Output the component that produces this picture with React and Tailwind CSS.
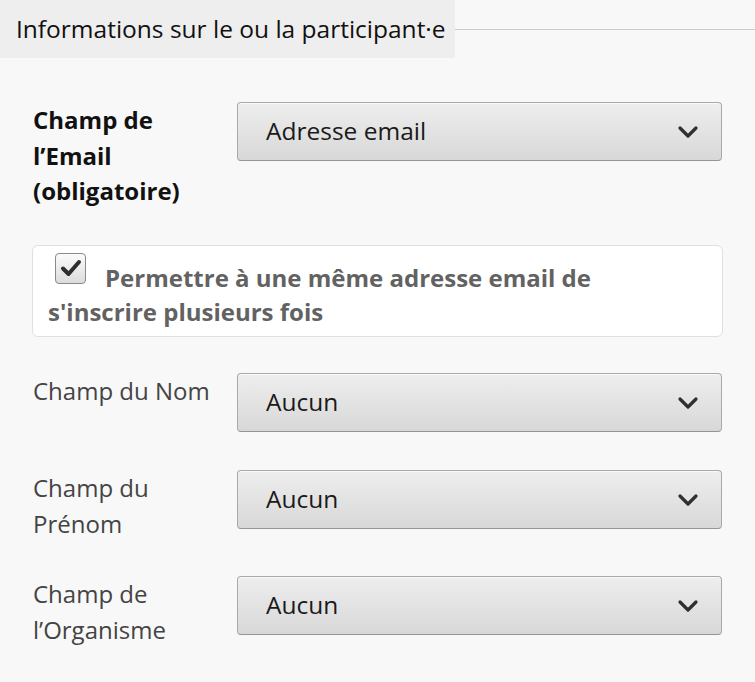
const Chevron = () => (
  <svg width="22" height="14" viewBox="0 0 22 14" fill="none">
    <path d="M3 3l8 8 8-8" stroke="#2f2f2f" strokeWidth="3.2" strokeLinecap="round" strokeLinejoin="round" />
  </svg>
);

const Select = ({ value }) => (
  <div className="flex h-[59px] flex-1 items-center justify-between rounded-[4px] border border-[#a9a9a9] border-b-[#959595] bg-gradient-to-b from-[#eeeeee] to-[#d8d8d8] pl-[28px] pr-[22px] shadow-[inset_0_1px_0_#fafafa]">
    <span className="text-[24.5px] text-[#1a1a1a]">{value}</span>
    <Chevron />
  </div>
);

const Row = ({ label, bold, value, className }) => (
  <div className={"flex items-start " + className}>
    <div
      className={
        bold
          ? "w-[204px] shrink-0 pr-[16px] text-[24px] font-bold leading-[35.5px] text-[#111]"
          : "w-[204px] shrink-0 pr-[16px] text-[24px] leading-[35.5px] text-[#444]"
      }
    >
      {label}
    </div>
    <Select value={value} />
  </div>
);

export default function App() {
  return (
    <div className="min-h-screen bg-[#f8f8f8] font-['Open_Sans',sans-serif]">
      <div className="flex items-center">
        <div className="flex h-[58px] w-[455px] shrink-0 items-center bg-[#eeeeee] pl-[16px] text-[24.5px] text-[#111]">
          Informations sur le ou la participant·e
        </div>
        <div className="h-px flex-1 bg-[#cccccc]" />
      </div>

      <div className="flex flex-col px-[33px] pt-[44px]">
        <Row bold label="Champ de l’Email (obligatoire)" value="Adresse email" className="mb-[36px]" />

        <div className="mb-[36px] -mx-px rounded-[6px] border border-[#e0e0e0] bg-white pl-[15px] pr-[100px] pb-[7px] pt-[11px] text-[24px] font-bold leading-[35px] text-[#626262]">
          <span className="mr-[19px] ml-[7px] inline-flex h-[31px] w-[31px] -translate-y-[4px] items-center justify-center rounded-[4px] border border-[#8a8a8a] bg-gradient-to-b from-[#fbfbfb] to-[#dcdcdc] align-[4px]">
            <svg width="22" height="20" viewBox="0 0 22 20" fill="none">
              <path d="M3 10.5l5.5 5.5L19 4" stroke="#2e2e2e" strokeWidth="4" strokeLinecap="round" strokeLinejoin="round" />
            </svg>
          </span>
          Permettre à une même adresse email de s'inscrire plusieurs fois
        </div>

        <Row label="Champ du Nom" value="Aucun" className="mb-[38px]" />
        <Row label="Champ du Prénom" value="Aucun" className="mb-[35px]" />
        <Row label="Champ de l’Organisme" value="Aucun" />
      </div>
    </div>
  );
}
